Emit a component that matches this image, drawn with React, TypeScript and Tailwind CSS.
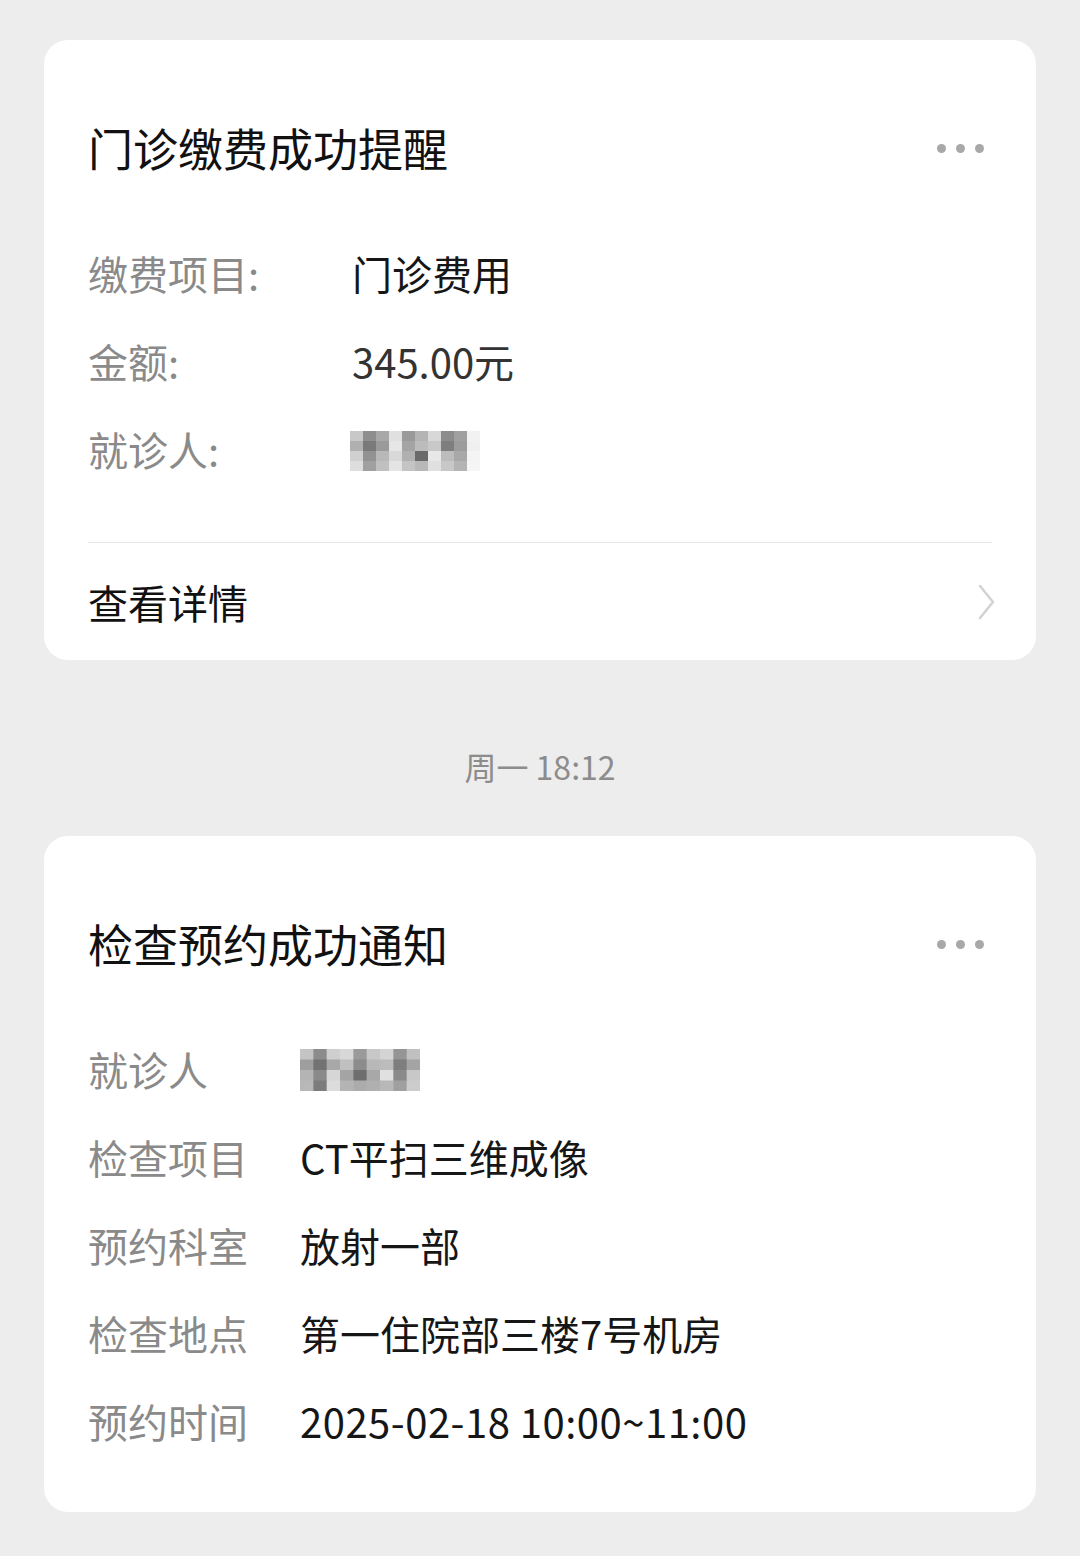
import React from "react";

const FONT = { fontFamily: '"Noto Sans CJK SC", "Noto Sans", sans-serif' };

// pixelated blur block standing in for a redacted name
const Mosaic = ({ cells, w, h }: { cells: string[][]; w: number; h: number }) => {
  const rows = cells.length;
  const cols = cells[0].length;
  const cw = w / cols;
  const ch = h / rows;
  return (
    <svg width={w} height={h} viewBox={`0 0 ${w} ${h}`} className="block">
      {cells.map((row, r) =>
        row.map((c, i) => (
          <rect key={`${r}-${i}`} x={i * cw} y={r * ch} width={cw + 0.5} height={ch + 0.5} fill={c} />
        ))
      )}
    </svg>
  );
};

const M1 = [
  ["#c8c8c8", "#8e8e8e", "#a8a8a8", "#e0e0e0", "#9a9a9a", "#b4b4b4", "#d8d8d8", "#8c8c8c", "#a0a0a0", "#f2f2f2"],
  ["#b0b0b0", "#7a7a7a", "#9a9a9a", "#e6e6e6", "#a4a4a4", "#bcbcbc", "#c8c8c8", "#7e7e7e", "#9c9c9c", "#f0f0f0"],
  ["#d0d0d0", "#929292", "#b8b8b8", "#d8d8d8", "#b0b0b0", "#6a6a6a", "#e8e8e8", "#bcbcbc", "#a8a8a8", "#f4f4f4"],
  ["#dedede", "#a0a0a0", "#c0c0c0", "#e4e4e4", "#c4c4c4", "#b8b8b8", "#e0e0e0", "#c8c8c8", "#b4b4b4", "#f6f6f6"],
];

const M2 = [
  ["#c4c4c4", "#8c8c8c", "#cfcfcf", "#d8d8d8", "#9a9a9a", "#c8c8c8", "#d4d4d4", "#959595", "#c0c0c0"],
  ["#9e9e9e", "#727272", "#a8a8a8", "#c0c0c0", "#8c8c8c", "#b8b8b8", "#bcbcbc", "#7e7e7e", "#a4a4a4"],
  ["#b4b4b4", "#8a8a8a", "#d6d6d6", "#a4a4a4", "#6e6e6e", "#a8a8a8", "#e0e0e0", "#8a8a8a", "#c8c8c8"],
  ["#b8b8b8", "#7c7c7c", "#dcdcdc", "#b4b4b4", "#acacac", "#b0b0b0", "#b8b8b8", "#a0a0a0", "#cccccc"],
];

const Dots = () => (
  <div className="flex items-center gap-[10px]">
    <span className="w-[9px] h-[9px] rounded-full bg-[#a8a8a8]" />
    <span className="w-[9px] h-[9px] rounded-full bg-[#a8a8a8]" />
    <span className="w-[9px] h-[9px] rounded-full bg-[#a8a8a8]" />
  </div>
);

const CardTitle = ({ text }: { text: string }) => (
  <div className="flex items-center justify-between pt-[78px] pr-[2px]">
    <h2 className="text-[45px] leading-[60px] text-[#111]">{text}</h2>
    <div className="pr-[6px]">
      <Dots />
    </div>
  </div>
);

const Row = ({ label, labelW, children }: { label: string; labelW: string; children: React.ReactNode }) => (
  <div className="flex items-center h-[88px]">
    <div className={`${labelW} shrink-0 text-[40px] text-[#8a8a8a]`}>{label}</div>
    <div className="text-[40px] text-[#161616]">{children}</div>
  </div>
);

export default function App() {
  return (
    <div className="min-h-[1556px] bg-[#ededed] pt-[40px] px-[44px]" style={FONT}>
      {/* payment card */}
      <div className="bg-white rounded-[24px] pl-[44px] pr-[44px]">
        <CardTitle text="门诊缴费成功提醒" />
        <div className="pt-[51px] pb-[49px]">
          <Row label="缴费项目:" labelW="w-[264px]">门诊费用</Row>
          <Row label="金额:" labelW="w-[264px]">
            <span className="text-[#333]">345.00元</span>
          </Row>
          <Row label="就诊人:" labelW="w-[264px]">
            <div className="-ml-[2px] pt-[4px]">
              <Mosaic cells={M1} w={130} h={40} />
            </div>
          </Row>
        </div>
        <div className="border-t border-[#e6e6e6] flex items-center justify-between h-[118px]">
          <span className="text-[40px] text-[#111]">查看详情</span>
          <svg width="18" height="36" viewBox="0 0 18 36" className="-mr-[4px]">
            <path d="M2 2 L15 18 L2 34" fill="none" stroke="#d2d2d2" strokeWidth="2.5" strokeLinecap="round" strokeLinejoin="round" />
          </svg>
        </div>
      </div>

      <div className="pt-[84px] pb-[48px] text-center text-[32px] leading-[44px] text-[#8c8c8c]">周一 18:12</div>

      {/* exam appointment card */}
      <div className="bg-white rounded-[24px] pl-[44px] pr-[44px] pb-[47px]">
        <CardTitle text="检查预约成功通知" />
        <div className="pt-[51px]">
          <Row label="就诊人" labelW="w-[212px]">
            <div className="pt-[2px]">
              <Mosaic cells={M2} w={120} h={42} />
            </div>
          </Row>
          <Row label="检查项目" labelW="w-[212px]">CT平扫三维成像</Row>
          <Row label="预约科室" labelW="w-[212px]">放射一部</Row>
          <Row label="检查地点" labelW="w-[212px]">第一住院部三楼7号机房</Row>
          <Row label="预约时间" labelW="w-[212px]">
            <span className="tracking-[0.5px]">2025-02-18 10:00~11:00</span>
          </Row>
        </div>
      </div>
    </div>
  );
}
